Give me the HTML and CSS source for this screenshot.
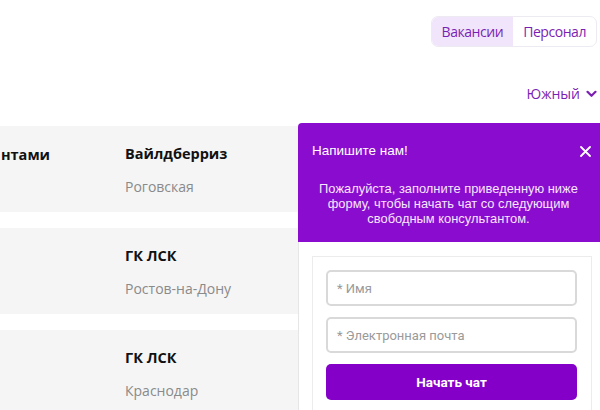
FILE: index.html
```html
<!DOCTYPE html>
<html lang="ru">
<head>
<meta charset="utf-8">
<link rel="stylesheet" href="styles.css">
</head>
<body>
<div class="page">
  <div class="topbar">
    <div class="toggle">
      <span class="seg active">Вакансии</span>
      <span class="seg">Персонал</span>
    </div>
  </div>
  <div class="region-row">
    <span class="region">Южный
      <svg class="chev" width="11" height="8" viewBox="0 0 11 8"><path d="M1.5 1.8 L5.5 5.8 L9.5 1.8" fill="none" stroke="#7b1fb3" stroke-width="2.2" stroke-linecap="round" stroke-linejoin="round"/></svg>
    </span>
  </div>
  <div class="cards">
    <div class="card">
      <div class="col1"><span class="title">нтами</span></div>
      <div class="col2"><div class="title">Вайлдберриз</div><div class="sub">Роговская</div></div>
    </div>
    <div class="card">
      <div class="col1"></div>
      <div class="col2"><div class="title">ГК ЛСК</div><div class="sub">Ростов-на-Дону</div></div>
    </div>
    <div class="card">
      <div class="col1"></div>
      <div class="col2"><div class="title">ГК ЛСК</div><div class="sub">Краснодар</div></div>
    </div>
  </div>

  <div class="chat">
    <div class="chat-head">
      <div class="chat-top">
        <span class="chat-title">Напишите нам!</span>
        <svg class="close" width="11" height="11" viewBox="0 0 11 11"><path d="M1 1 L10 10 M10 1 L1 10" stroke="#fff" stroke-width="1.8" stroke-linecap="round"/></svg>
      </div>
      <p class="chat-text">Пожалуйста, заполните приведенную ниже форму, чтобы начать чат со следующим свободным консультантом.</p>
    </div>
    <div class="chat-body">
      <div class="form">
        <div class="input">* Имя</div>
        <div class="input">* Электронная почта</div>
        <div class="btn">Начать чат</div>
      </div>
    </div>
  </div>
</div>
</body>
</html>
```

FILE: styles.css
```css
html, body {
  margin: 0;
  padding: 0;
  background: #fff;
}
body {
  width: 600px;
  height: 410px;
  overflow: hidden;
  font-family: "Open Sans", "Noto Sans", sans-serif;
}
.page {
  position: relative;
  width: 600px;
  height: 410px;
  overflow: hidden;
}
.topbar {
  display: flex;
  justify-content: flex-end;
  padding: 16px 3px 0 0;
}
.toggle {
  display: flex;
  height: 31px;
  border: 1px solid #eeeaf2;
  border-radius: 7px;
  overflow: hidden;
  box-sizing: border-box;
}
.seg {
  display: flex;
  align-items: center;
  padding: 0 10px 0 10px;
  font-family: "Open Sans", sans-serif;
  font-size: 14px;
  color: #7b1fb3;
  letter-spacing: -0.45px;
}
.seg.active {
  background: #f1e5fb;
}
.region-row {
  display: flex;
  justify-content: flex-end;
  padding: 36px 3px 0 0;
  height: 20px;
}
.region {
  display: flex;
  align-items: center;
  gap: 6px;
  font-size: 14px;
  color: #7b1fb3;
}
.chev { margin-top: 1px; }
.cards {
  margin-top: 23px;
  display: flex;
  flex-direction: column;
  gap: 16px;
}
.card {
  display: flex;
  height: 86px;
  background: #f5f5f5;
  width: 600px;
}
.col1 {
  width: 125px;
  padding: 17px 0 0 1px;
  box-sizing: border-box;
}
.col1 .title {
  white-space: nowrap;
}
.col2 {
  padding-top: 18px;
}
.title {
  font-size: 14.5px;
  font-weight: 700;
  color: #111;
  line-height: 20px;
}
.sub {
  margin-top: 13px;
  font-size: 14px;
  color: #8a8a8a;
  line-height: 20px;
}
.chat {
  position: absolute;
  left: 298px;
  top: 123px;
  width: 302px;
  height: 300px;
  font-family: "Liberation Sans", Arial, sans-serif;
}
.chat-head {
  background: #8a0cce;
  border-top-left-radius: 4px;
  height: 119px;
  padding: 0 9px 0 14px;
  box-sizing: border-box;
  color: #fff;
}
.chat-top {
  display: flex;
  justify-content: space-between;
  align-items: center;
  padding-top: 20px;
}
.chat-title {
  font-size: 13.5px;
  line-height: 16px;
}
.chat-text {
  margin: 22px 0 0 0;
  text-align: center;
  font-size: 12.9px;
  line-height: 15px;
  color: #f6e6ff;
  padding: 0 6px 0 0;
}
.chat-body {
  background: #fff;
  border-left: 1px solid #e6e6e6;
  padding: 14px 8px 0 13px;
  height: 200px;
  box-sizing: border-box;
}
.form {
  border: 1px solid #ececec;
  border-bottom: none;
  padding: 13px 14px 0 13px;
  display: flex;
  flex-direction: column;
  gap: 11px;
  height: 200px;
  box-sizing: border-box;
}
.input {
  height: 36px;
  border: 2px solid #d9d9d9;
  border-radius: 5px;
  box-sizing: border-box;
  display: flex;
  align-items: center;
  padding-left: 9px;
  font-family: Roboto, "Liberation Sans", sans-serif;
  font-size: 13px;
  color: #9a9a9a;
}
.btn {
  height: 36px;
  border-radius: 5px;
  background: #8400c9;
  color: #fff;
  display: flex;
  align-items: center;
  justify-content: center;
  font-family: Roboto, "Liberation Sans", sans-serif;
  font-weight: 700;
  font-size: 13.5px;
}
```
